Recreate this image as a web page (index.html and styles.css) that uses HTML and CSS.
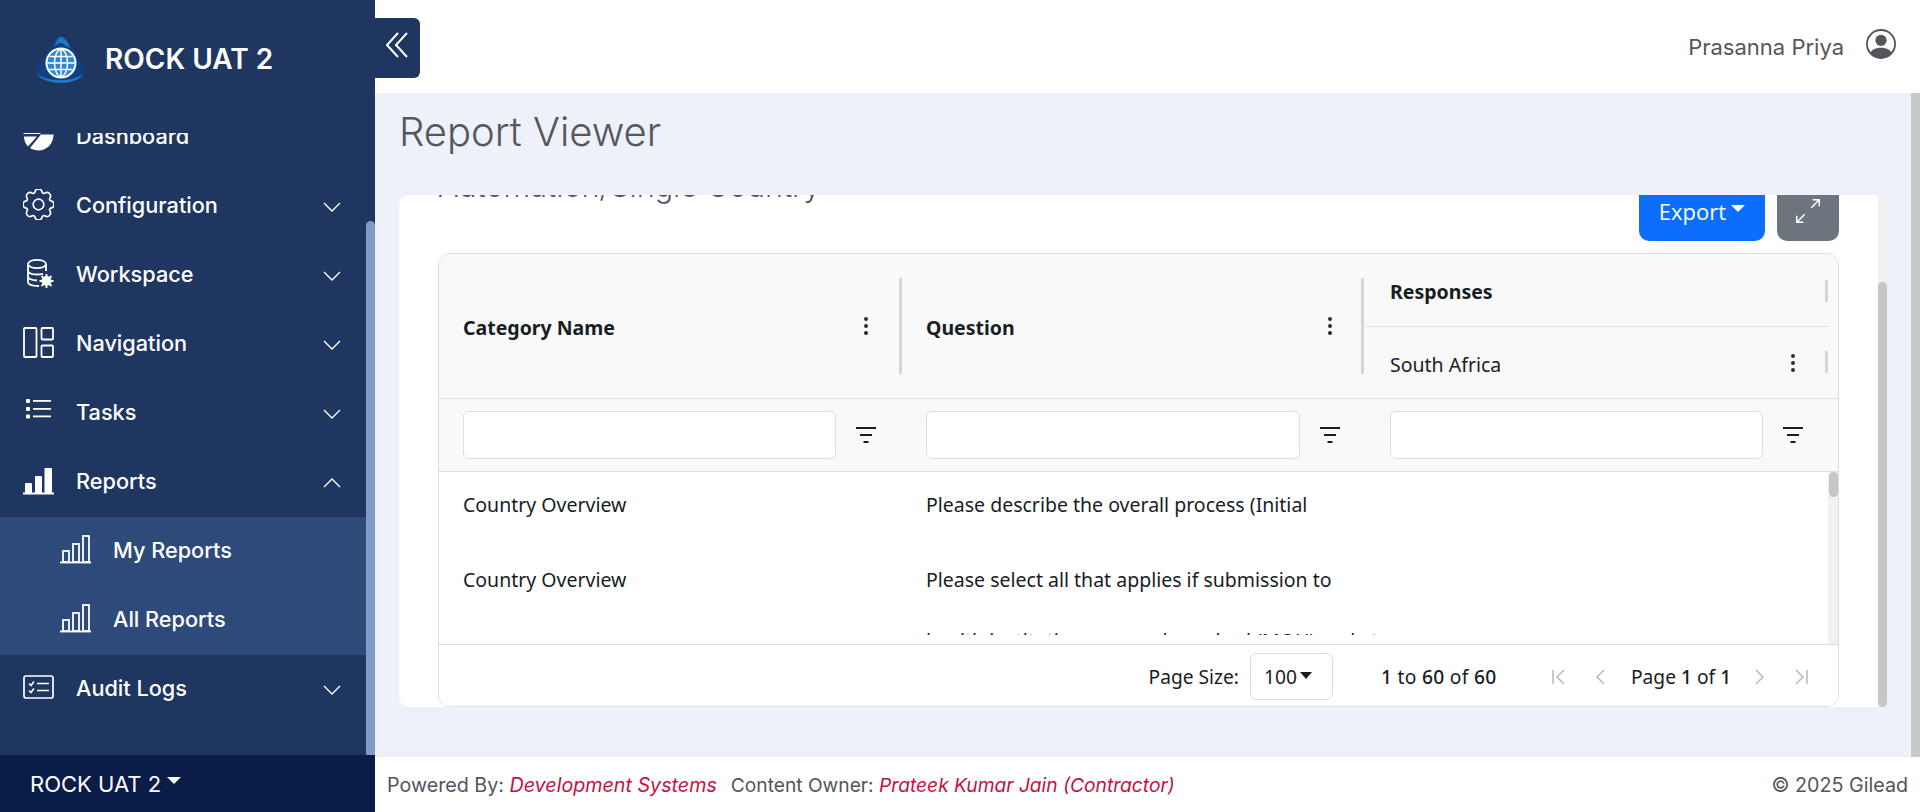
FILE: index.html
```html
<!DOCTYPE html>
<html lang="en">
<head>
    <meta charset="UTF-8">
    <title>Report Viewer</title>
    <link rel="stylesheet" href="styles.css">
</head>
<body>

<!-- left menu -->
<aside class="sidebar">
    <div class="brand">
        <svg class="brand-logo" viewBox="0 0 48 48">
            <path d="M25 0C30 0 33 5 35 10C41 18 48 30 48 38C48 41 45 41 42 42C34 47 16 47 7 42C3 41 0 41 0 38C0 30 9 18 15 10C17 5 20 0 25 0Z" fill="#123f7e"/>
            <path d="M25 1C29 1 32 6 34 12L30 10C28 8 26 7 25 7C22 7 20 9 18 11C20 6 22 1 25 1ZM1 38C8 43 18 44 25 44C32 44 40 43 47 38C44 44 34 47 25 47C16 47 4 44 1 38Z" fill="#1f78c8"/>
            <circle cx="25" cy="27" r="15.500" fill="#fff"/>
            <circle cx="25" cy="27" r="13.500" fill="#2f86d6"/>
            <g fill="none" stroke="#fff" stroke-width="1.500">
                <ellipse cx="25" cy="27" rx="6.500" ry="13.500"/>
                <path d="M25 13.500V40.500M11.500 27H38.500M13.500 20.500H36.500M13.500 33.500H36.500"/>
            </g>
        </svg>
        <span class="brand-name">ROCK UAT 2</span>
    </div>

    <nav class="menu">
        <div class="menu-list">
            <a class="menu-item menu-first">
                <svg class="menu-icon" viewBox="0 0 31 31"><path d="M1 16.500H14L5 26.500C2.500 24 1 20.500 1 16.500ZM18 14.500H30.500C30.500 23.500 24 30.500 15.500 30.500C12.500 30.500 9.500 29.500 7 28ZM0.500 14C1 6.500 7.500 0.500 15.500 0.500C20 0.500 24 2.500 27 5.500L17 14Z" fill="#fff"/></svg>
                <span class="menu-text">Dashboard</span>
            </a>
            <a class="menu-item">
                <svg class="menu-icon" viewBox="0 0 16 16" fill="none" stroke="#fff" stroke-width="0.85"><circle cx="8" cy="8" r="2.750"/><path d="M9.796 1.343c-.527-1.79-3.065-1.79-3.592 0l-.094.319a.873.873 0 0 1-1.255.52l-.292-.16c-1.64-.892-3.433.902-2.54 2.541l.159.292a.873.873 0 0 1-.52 1.255l-.319.094c-1.79.527-1.79 3.065 0 3.592l.319.094a.873.873 0 0 1 .52 1.255l-.16.292c-.892 1.64.901 3.434 2.541 2.54l.292-.159a.873.873 0 0 1 1.255.52l.094.319c.527 1.79 3.065 1.79 3.592 0l.094-.319a.873.873 0 0 1 1.255-.52l.292.16c1.64.893 3.434-.902 2.54-2.541l-.159-.292a.873.873 0 0 1 .52-1.255l.319-.094c1.79-.527 1.79-3.065 0-3.592l-.319-.094a.873.873 0 0 1-.52-1.255l.16-.292c.893-1.64-.902-3.433-2.541-2.54l-.292.159a.873.873 0 0 1-1.255-.52l-.094-.319z"/></svg>
                <span class="menu-text">Configuration</span>
                <svg class="chevron" viewBox="0 0 18 10"><path d="M1 1L9 9L17 1"/></svg>
            </a>
            <a class="menu-item">
                <svg class="menu-icon" viewBox="0 0 31 31" fill="none" stroke="#fff" stroke-width="1.800"><path d="M5 6V24C5 26.500 9 28 16 28M23 6V13M5 12.500C5 15 9 16.500 14 16.500C16 16.500 18 16.300 20 15.800M5 18.500C5 20.500 8 22 14 22.500"/><ellipse cx="14" cy="6" rx="9" ry="4.200"/><circle cx="23.500" cy="23" r="3.500" fill="#fff" stroke-width="3"/><path d="M23.500 16V30M16.500 23H30.500M18.500 18L28.500 28M28.500 18L18.500 28" stroke-width="1.800"/></svg>
                <span class="menu-text">Workspace</span>
                <svg class="chevron" viewBox="0 0 18 10"><path d="M1 1L9 9L17 1"/></svg>
            </a>
            <a class="menu-item">
                <svg class="menu-icon" viewBox="0 0 31 31" fill="none" stroke="#fff" stroke-width="1.800"><rect x="1" y="1" width="12.500" height="29" rx="1"/><rect x="18.500" y="1" width="11.500" height="11.500" rx="1"/><rect x="18.500" y="18.500" width="11.500" height="11.500" rx="1"/></svg>
                <span class="menu-text">Navigation</span>
                <svg class="chevron" viewBox="0 0 18 10"><path d="M1 1L9 9L17 1"/></svg>
            </a>
            <a class="menu-item">
                <svg class="menu-icon" viewBox="0 0 31 31" fill="#fff"><rect x="3" y="3" width="4" height="4" rx="1"/><rect x="3" y="11" width="4" height="4" rx="1"/><rect x="3" y="18.500" width="4" height="4" rx="1"/><rect x="10" y="4" width="18" height="1.800"/><rect x="10" y="12" width="18" height="1.800"/><rect x="10" y="19.500" width="18" height="1.800"/></svg>
                <span class="menu-text">Tasks</span>
                <svg class="chevron" viewBox="0 0 18 10"><path d="M1 1L9 9L17 1"/></svg>
            </a>
            <a class="menu-item">
                <svg class="menu-icon" viewBox="0 0 31 31" fill="#fff"><rect x="2" y="18" width="7" height="10" rx="1"/><rect x="12" y="11" width="7" height="17" rx="1"/><rect x="21.500" y="3" width="7.500" height="25" rx="1"/><rect x="0" y="27.500" width="31" height="2"/></svg>
                <span class="menu-text">Reports</span>
                <svg class="chevron" viewBox="0 0 18 10"><path d="M1 9L9 1L17 9"/></svg>
            </a>
            <div class="submenu">
                <a class="menu-item sub-item">
                    <svg class="menu-icon" viewBox="0 0 31 31" fill="none" stroke="#fff" stroke-width="1.800"><rect x="3" y="17" width="6" height="11"/><rect x="13" y="10" width="6" height="18"/><rect x="23" y="2" width="6" height="26"/><path d="M0 28.500H31"/></svg>
                    <span class="menu-text">My Reports</span>
                </a>
                <a class="menu-item sub-item">
                    <svg class="menu-icon" viewBox="0 0 31 31" fill="none" stroke="#fff" stroke-width="1.800"><rect x="3" y="17" width="6" height="11"/><rect x="13" y="10" width="6" height="18"/><rect x="23" y="2" width="6" height="26"/><path d="M0 28.500H31"/></svg>
                    <span class="menu-text">All Reports</span>
                </a>
            </div>
            <a class="menu-item">
                <svg class="menu-icon" viewBox="0 0 31 31" fill="none" stroke="#fff" stroke-width="1.700"><rect x="1" y="4" width="29" height="22" rx="2"/><path d="M14 11.500H26M14 18.500H26"/><path d="M6 11.500L8 13.500L11 9.500M6 18.500L8 20.500L11 16.500" stroke-width="1.500"/></svg>
                <span class="menu-text">Audit Logs</span>
                <svg class="chevron" viewBox="0 0 18 10"><path d="M1 1L9 9L17 1"/></svg>
            </a>
        </div>
        <div class="menu-thumb"></div>
    </nav>

    <div class="env-bar">ROCK UAT 2<span class="caret"></span></div>
</aside>

<div class="main">
    <!-- top bar -->
    <header class="topbar">
        <a class="collapse-btn">
            <svg viewBox="0 0 22 26" fill="none" stroke="#fff" stroke-width="2"><path d="M12 1L1 13L12 25M21 1L10 13L21 25"/></svg>
        </a>
        <span class="user-name">Prasanna Priya</span>
        <svg class="user-icon" viewBox="0 0 16 16" fill="#55565a">
            <path d="M11 6a3 3 0 1 1-6 0 3 3 0 0 1 6 0z"/>
            <path fill-rule="evenodd" d="M0 8a8 8 0 1 1 16 0A8 8 0 0 1 0 8zm8-7a7 7 0 0 0-5.468 11.370C3.242 11.226 4.805 10 8 10s4.757 1.225 5.468 2.370A7 7 0 0 0 8 1z"/>
        </svg>
    </header>

    <main class="content">
        <h1 class="page-title">Report Viewer</h1>

        <section class="card">
            <div class="card-inner">
                <div class="card-head">
                    <h2 class="report-name">Automation/Single Country</h2>
                    <button class="btn btn-export">Export<span class="caret"></span></button>
                    <button class="btn btn-expand">
                        <svg viewBox="0 0 16 16" fill="#fff"><path fill-rule="evenodd" d="M5.828 10.172a.5.5 0 0 0-.707 0l-4.096 4.096V11.500a.5.5 0 0 0-1 0v3.975a.5.5 0 0 0 .5.5H4.500a.5.5 0 0 0 0-1H1.732l4.096-4.096a.5.5 0 0 0 0-.707zm4.344-4.344a.5.5 0 0 0 .707 0l4.096-4.096V4.500a.5.5 0 1 0 1 0V.525a.5.5 0 0 0-.5-.5H11.500a.5.5 0 0 0 0 1h2.768l-4.096 4.096a.5.5 0 0 0 0 .707z"/></svg>
                    </button>
                </div>

                <div class="grid">
                    <div class="grid-head">
                        <div class="head-cell">
                            <span class="head-label">Category Name</span>
                            <span class="kebab"><i></i><i></i><i></i></span>
                        </div>
                        <div class="head-cell">
                            <span class="head-label">Question</span>
                            <span class="kebab"><i></i><i></i><i></i></span>
                        </div>
                        <div class="head-group">
                            <div class="group-title"><span class="head-label">Responses</span></div>
                            <div class="group-child">
                                <span class="child-label">South Africa</span>
                                <span class="kebab"><i></i><i></i><i></i></span>
                            </div>
                        </div>
                    </div>

                    <div class="filter-row">
                        <div class="filter-cell">
                            <input class="filter-input" type="text">
                            <svg class="filter-icon" viewBox="0 0 20 16"><path d="M0 1H20M4 8H16M7.500 15H12.500"/></svg>
                        </div>
                        <div class="filter-cell">
                            <input class="filter-input" type="text">
                            <svg class="filter-icon" viewBox="0 0 20 16"><path d="M0 1H20M4 8H16M7.500 15H12.500"/></svg>
                        </div>
                        <div class="filter-cell">
                            <input class="filter-input" type="text">
                            <svg class="filter-icon" viewBox="0 0 20 16"><path d="M0 1H20M4 8H16M7.500 15H12.500"/></svg>
                        </div>
                    </div>

                    <div class="grid-body">
                        <div class="grid-row">
                            <div class="cell">Country Overview</div>
                            <div class="cell">Please describe the overall process (Initial</div>
                            <div class="cell"></div>
                        </div>
                        <div class="grid-row row-tall">
                            <div class="cell">Country Overview</div>
                            <div class="cell">Please select all that applies if submission to<br>health institution approval required (MOH) and at</div>
                            <div class="cell"></div>
                        </div>
                        <div class="body-thumb"></div>
                    </div>

                    <div class="pager">
                        <span>Page Size:</span>
                        <span class="size-select">100<span class="caret caret-dark"></span></span>
                        <span class="pager-count"><b>1</b> to <b>60</b> of <b>60</b></span>
                        <span class="pager-nav">
                            <svg class="pager-icon" viewBox="0 0 16 18"><path d="M2 2V16M13 2L6 9L13 16"/></svg>
                            <svg class="pager-icon" viewBox="0 0 16 18"><path d="M11 2L4 9L11 16"/></svg>
                            <span class="pager-page">Page <b>1</b> of <b>1</b></span>
                            <svg class="pager-icon" viewBox="0 0 16 18"><path d="M5 2L12 9L5 16"/></svg>
                            <svg class="pager-icon" viewBox="0 0 16 18"><path d="M14 2V16M3 2L10 9L3 16"/></svg>
                        </span>
                    </div>
                </div>
            </div>
            <div class="card-scroll"><div class="card-thumb"></div></div>
        </section>
        <div class="page-thumb"></div>
    </main>

    <footer class="footer">
        <span class="footer-source">Powered By: <em>Development Systems</em></span>
        <span class="footer-owner">Content Owner: <em>Prateek Kumar Jain (Contractor)</em></span>
        <span class="footer-copy">© 2025 Gilead</span>
    </footer>
</div>

</body>
</html>
```

FILE: styles.css
```css
* {
    box-sizing: border-box;
}
html, body {
    height: 100%;
}
body {
    margin: 0;
    display: flex;
    height: 812px;
    overflow: hidden;
    font-family: Inter, "Liberation Sans", sans-serif;
    background-color: #eef1f9;
}

/* left menu */
.sidebar {
    width: 375px;
    flex-shrink: 0;
    display: flex;
    flex-direction: column;
    background-color: #1f3661;
    color: #fff;
}
.brand {
    height: 133px;
    flex-shrink: 0;
    display: flex;
    align-items: flex-start;
    padding: 36px 0 0 36px;
    gap: 21px;
}
.brand-logo {
    width: 48px;
    height: 48px;
}
.brand-name {
    font-size: 28px;
    font-weight: 600;
    line-height: 42px;
    margin-top: 2px;
}
.menu {
    position: relative;
    flex: 1;
    overflow: hidden;
    padding-right: 9px;
}
.menu-list {
    margin-top: -30px;
}
.menu-item {
    height: 69px;
    display: flex;
    align-items: center;
    padding: 0 25px 0 23px;
    gap: 22px;
}
.menu-icon {
    width: 31px;
    height: 31px;
    flex-shrink: 0;
    margin-top: -5px;
}
.menu-text {
    flex: 1;
    font-size: 21.700px;
    font-weight: 500;
    margin-top: -4px;
}
.chevron {
    width: 18px;
    height: 10px;
    fill: none;
    stroke: #fff;
    stroke-width: 1.4;
}
.submenu {
    background-color: #2e4a7b;
}
.sub-item {
    padding-left: 60px;
}
.menu-thumb {
    position: absolute;
    top: 88px;
    bottom: 0;
    right: 0;
    width: 9px;
    background-color: #7f9bc6;
    border-radius: 5px 5px 0 0;
}
.env-bar {
    height: 57px;
    flex-shrink: 0;
    display: flex;
    align-items: center;
    padding-left: 30px;
    background-color: #0a1c48;
    font-size: 22px;
}
.caret {
    display: inline-block;
    border-left: 7px solid transparent;
    border-right: 7px solid transparent;
    border-top: 7px solid #fff;
    margin-left: 6px;
    margin-top: -6px;
}
.caret-dark {
    border-left-width: 6px;
    border-right-width: 6px;
    border-top-color: #181d1f;
}

.main {
    flex: 1;
    min-width: 0;
    display: flex;
    flex-direction: column;
}

/* top bar */
.topbar {
    position: relative;
    height: 93px;
    flex-shrink: 0;
    display: flex;
    align-items: center;
    justify-content: flex-end;
    padding-right: 24px;
    background-color: #fff;
}
.collapse-btn {
    position: absolute;
    left: 0;
    top: 18px;
    width: 45px;
    height: 60px;
    display: flex;
    align-items: center;
    justify-content: center;
    padding-right: 1px;
    background-color: #1f3661;
    border-radius: 0 6px 6px 0;
}
.collapse-btn svg {
    width: 22px;
    height: 26px;
    margin-top: -7px;
}
.user-name {
    font-size: 22px;
    color: #55565a;
    margin-right: 22px;
}
.user-icon {
    width: 30px;
    height: 30px;
    margin-top: -6px;
}

/* content */
.content {
    position: relative;
    flex: 1;
    min-height: 0;
    padding: 0 33px 50px 24px;
    display: flex;
    flex-direction: column;
}
.page-title {
    height: 102px;
    margin: 0;
    padding-top: 13px;
    font-size: 40px;
    font-weight: 300;
    line-height: 52px;
    color: #54575c;
}
.page-thumb {
    position: absolute;
    top: 0;
    bottom: 0;
    right: 0;
    width: 9px;
    background-color: #c8c8c8;
}
.card {
    flex: 1;
    min-height: 0;
    display: flex;
    background-color: #fff;
    border-radius: 10px 0 0 10px;
    overflow: hidden;
}
.card-inner {
    flex: 1;
    min-width: 0;
    padding: 0 39px 0 39px;
    display: flex;
    flex-direction: column;
    height: 100%;
}
.card-scroll {
    width: 9px;
    flex-shrink: 0;
    background-color: #f1f1f1;
    padding-top: 87px;
}
.card-thumb {
    height: 100%;
    background-color: #c6c6c6;
    border-radius: 5px;
}
.card-head {
    height: 76px;
    margin-top: -30px;
    margin-bottom: 12px;
    flex-shrink: 0;
    display: flex;
}
.report-name {
    flex: 1;
    margin: 0;
    padding-top: 1px;
    font-size: 30.600px;
    font-weight: 300;
    line-height: 40px;
    color: #54575c;
}
.btn {
    border: none;
    color: #fff;
    font-family: "Open Sans", sans-serif;
    font-size: 22px;
    display: flex;
    align-items: center;
    justify-content: center;
    border-radius: 10px;
}
.btn-export {
    width: 126px;
    background-color: #0d6efd;
    padding-top: 17px;
}
.btn-export .caret {
    margin-left: 5px;
}
.btn-expand {
    width: 62px;
    margin-left: 12px;
    background-color: #6c757d;
    padding-top: 16px;
}
.btn-expand svg {
    width: 24px;
    height: 24px;
}

/* report grid */
.grid {
    flex: 1;
    min-height: 0;
    display: flex;
    flex-direction: column;
    border: 1px solid #ddd;
    border-radius: 12px;
    font-family: "Noto Sans", "Open Sans", sans-serif;
    font-size: 19.500px;
    color: #181d1f;
    overflow: hidden;
}
.grid-head {
    height: 144px;
    flex-shrink: 0;
    display: grid;
    grid-template-columns: 463px 464px 463px;
    padding-right: 10px;
    background-color: #f9f9f9;
}
.head-cell {
    position: relative;
    display: flex;
    align-items: center;
    justify-content: space-between;
    padding: 0 24px;
}
.head-cell::after {
    content: "";
    position: absolute;
    right: 0;
    top: 24px;
    height: 96px;
    width: 3px;
    background-color: #d6d6d6;
}
.head-cell:nth-child(2)::after {
    right: 2px;
}
.head-label {
    font-weight: 700;
    margin-top: 2px;
}
.child-label {
    margin-top: 3px;
}
.kebab {
    display: flex;
    flex-direction: column;
    gap: 3px;
    width: 4px;
    margin-right: 10px;
}
.kebab i {
    width: 4px;
    height: 4px;
    border-radius: 50%;
    background-color: #2a2d30;
}
.head-group {
    display: flex;
    flex-direction: column;
}
.group-title {
    position: relative;
    height: 73px;
    display: flex;
    align-items: center;
    padding-left: 24px;
    border-bottom: 1px solid #ddd;
}
.group-title::after, .group-child::after {
    content: "";
    position: absolute;
    right: 1px;
    width: 3px;
    height: 22px;
    background-color: #d6d6d6;
}
.group-title::after {
    top: 26px;
}
.group-child::after {
    bottom: 25px;
}
.group-child {
    position: relative;
    flex: 1;
    display: flex;
    align-items: center;
    justify-content: space-between;
    padding: 0 24px;
}
.filter-row {
    height: 74px;
    flex-shrink: 0;
    display: grid;
    grid-template-columns: 463px 464px 463px;
    padding-right: 10px;
    background-color: #f9f9f9;
    border-top: 1px solid #ddd;
    border-bottom: 1px solid #ddd;
}
.filter-cell {
    display: flex;
    align-items: center;
    padding: 0 26px 0 24px;
    gap: 20px;
}
.filter-input {
    flex: 1;
    min-width: 0;
    height: 48px;
    background-color: #fff;
    border: 1px solid #ddd;
    border-radius: 6px;
}
.filter-icon {
    width: 20px;
    height: 16px;
    fill: none;
    stroke: #181d1f;
    stroke-width: 2;
}
.grid-body {
    position: relative;
    height: 173px;
    flex-shrink: 0;
    overflow: hidden;
    background-color: #fff;
    border-bottom: 1px solid #ddd;
}
.grid-body::after {
    content: "";
    position: absolute;
    top: 0;
    bottom: 0;
    right: 0;
    width: 10px;
    background-color: #f1f1f1;
}
.body-thumb {
    position: absolute;
    top: 0;
    right: 0;
    width: 9px;
    height: 25px;
    background-color: #c6c6c6;
    border-radius: 5px;
    z-index: 1;
}
.grid-row {
    height: 75px;
    display: grid;
    grid-template-columns: 463px 464px 463px;
    padding-top: 2px;
    overflow: hidden;
}
.row-tall {
    height: 88px;
}
.cell {
    padding: 0 24px;
    line-height: 61px;
    white-space: nowrap;
}
.pager {
    flex: 1;
    display: flex;
    align-items: center;
    justify-content: flex-end;
    padding: 2px 29px 0 0;
    background-color: #fff;
    font-size: 19.200px;
}
.pager b {
    font-weight: 500;
}
.size-select {
    width: 83px;
    height: 47px;
    margin-left: 11px;
    padding-left: 13px;
    display: flex;
    align-items: center;
    border: 1px solid #ddd;
    border-radius: 6px;
}
.size-select .caret {
    margin-left: 3px;
    margin-top: -3px;
}
.pager-count {
    margin-left: 48px;
    width: 170px;
    letter-spacing: 0.3px;
}
.pager-nav {
    display: flex;
    align-items: center;
}
.pager-nav .pager-icon + .pager-icon {
    margin-left: 26px;
}
.pager-icon {
    width: 16px;
    height: 18px;
    fill: none;
    stroke: #b9b9b9;
    stroke-width: 1.5;
}
.pager-page {
    width: 98px;
    margin: 0 22px;
    white-space: nowrap;
}

/* footer */
.footer {
    height: 55px;
    flex-shrink: 0;
    display: flex;
    align-items: center;
    padding: 0 12px;
    background-color: #fff;
    font-size: 19.700px;
    color: #51555b;
}
.footer em {
    color: #c8103e;
}
.footer-owner {
    margin-left: 14px;
    font-size: 19.200px;
}
.footer-copy {
    margin-left: auto;
}
```
